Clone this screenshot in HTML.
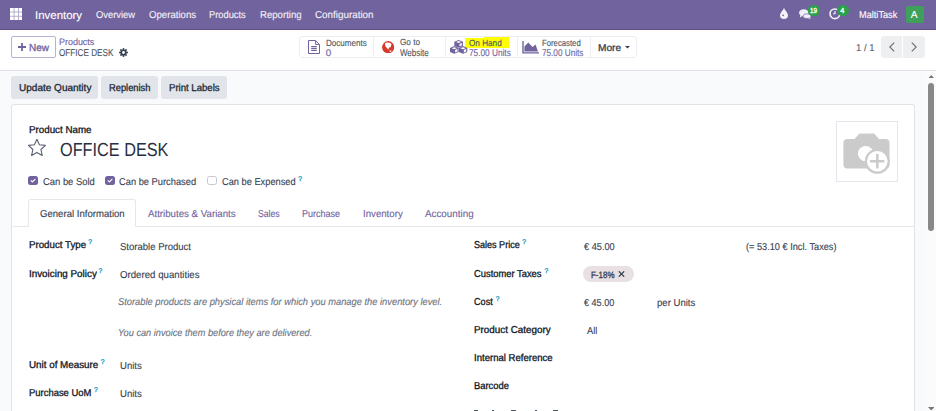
<!DOCTYPE html>
<html><head><meta charset="utf-8">
<style>
*{box-sizing:border-box;margin:0;padding:0}
html,body{width:936px;height:411px;overflow:hidden;background:#f9fafb;font-family:"Liberation Sans",sans-serif;text-rendering:geometricPrecision}
.t{position:absolute;white-space:nowrap;line-height:1;transform-origin:0 0}
.a{position:absolute}
</style></head><body>
<!-- navbar -->
<div class="a" style="left:0;top:0;width:936px;height:30px;background:#71639e;border-bottom:1px solid #5f5089"></div>
<svg class="a" style="left:9.7px;top:7.9px" width="12.4" height="12.2" viewBox="0 0 12.4 12.2"><rect width="12.4" height="12.2" fill="#fff"/><path d="M4.1 0V12.2M8.5 0V12.2M0 4H12.4M0 8.3H12.4" stroke="#71639e" stroke-width="0.9" opacity="0.55"/></svg>
<!-- droplet -->
<svg class="a" style="left:780px;top:8px" width="8" height="11" viewBox="0 0 8 11"><path d="M4 0 C4.8 2.4 8 4.8 8 7.2 A4 3.8 0 0 1 0 7.2 C0 4.8 3.2 2.4 4 0Z" fill="#f4f2fa"/><circle cx="3.1" cy="7.3" r="0.9" fill="#71639e"/></svg>
<!-- chat -->
<svg class="a" style="left:798.8px;top:9px" width="13" height="10" viewBox="0 0 13 10"><ellipse cx="4.8" cy="3.7" rx="4.8" ry="3.5" fill="#f0eef6"/><path d="M1.2 6 L1 8.4 L3.8 6.8Z" fill="#f0eef6"/><ellipse cx="8" cy="7.2" rx="4" ry="2.4" fill="#f0eef6" stroke="#71639e" stroke-width="0.7"/><path d="M10.5 8.6 L12.2 9.8 L9 9.2Z" fill="#f0eef6"/></svg>
<div class="a" style="left:807.9px;top:4.7px;width:11.8px;height:11.8px;border-radius:6px;background:#2aa148"></div>
<!-- clock -->
<svg class="a" style="left:829.2px;top:7.6px" width="12" height="12" viewBox="0 0 12 12"><circle cx="5.9" cy="5.8" r="4.85" fill="none" stroke="#f4f2fa" stroke-width="1.6"/><path d="M6 3 V5.7 H4" stroke="#f4f2fa" stroke-width="1.15" fill="none"/></svg>
<div class="a" style="left:836.8px;top:4.7px;width:11.8px;height:11.8px;border-radius:6px;background:#2aa148"></div>
<div class="a" style="left:906px;top:5.7px;width:17.5px;height:17.3px;border-radius:2px;background:#3ea05a"></div>
<!-- control panel -->
<div class="a" style="left:0;top:30px;width:936px;height:41px;background:#fff;border-bottom:1px solid #dee2e6"></div>
<div class="a" style="left:11.2px;top:35.5px;width:44.6px;height:22.4px;border:1px solid #b9b0d3;border-radius:2px"></div>
<svg class="a" style="left:18px;top:43px" width="8" height="8" viewBox="0 0 8 8"><path d="M4 0V8M0 4H8" stroke="#71639e" stroke-width="1.8"/></svg>
<!-- gear -->
<svg class="a" style="left:118.7px;top:48.3px" width="9" height="9" viewBox="-4.5 -4.5 9 9"><g fill="#374151"><circle r="3.1"/><rect x="-0.8" y="-4.4" width="1.6" height="2.2" transform="rotate(0)"/><rect x="-0.8" y="-4.4" width="1.6" height="2.2" transform="rotate(45)"/><rect x="-0.8" y="-4.4" width="1.6" height="2.2" transform="rotate(90)"/><rect x="-0.8" y="-4.4" width="1.6" height="2.2" transform="rotate(135)"/><rect x="-0.8" y="-4.4" width="1.6" height="2.2" transform="rotate(180)"/><rect x="-0.8" y="-4.4" width="1.6" height="2.2" transform="rotate(225)"/><rect x="-0.8" y="-4.4" width="1.6" height="2.2" transform="rotate(270)"/><rect x="-0.8" y="-4.4" width="1.6" height="2.2" transform="rotate(315)"/></g><circle r="1.4" fill="#fff"/></svg>
<!-- smart buttons -->
<div class="a" style="left:299px;top:36px;width:337.5px;height:22px;border:1px solid #eceef1;border-radius:3px;background:#fff"></div>
<div class="a" style="left:373.4px;top:36px;width:1px;height:22px;background:#eceef1"></div>
<div class="a" style="left:445.3px;top:36px;width:1px;height:22px;background:#eceef1"></div>
<div class="a" style="left:517.2px;top:36px;width:1px;height:22px;background:#eceef1"></div>
<div class="a" style="left:590.4px;top:36px;width:1px;height:22px;background:#eceef1"></div>
<!-- doc icon -->
<svg class="a" style="left:308px;top:40px" width="13" height="14" viewBox="0 0 13 14"><path d="M0.5 0.5 H7.5 L11.5 4.5 V13.5 H0.5Z" fill="none" stroke="#71639e" stroke-width="1"/><path d="M7.6 0.6 V4.4 H11.4" fill="none" stroke="#71639e" stroke-width="1"/><path d="M3.2 6.6H8.8M3.2 8.5H8.8M3.2 10.4H8.8" stroke="#71639e" stroke-width="1.1"/></svg>
<!-- globe -->
<svg class="a" style="left:381.8px;top:40.6px" width="12.4" height="12.4" viewBox="0 0 12.4 12.4"><circle cx="6.2" cy="6.2" r="6.1" fill="#d8392f"/><path d="M3.2 2 Q4.5 1.2 6 1.6 Q7.2 2.2 7.6 1.6 Q9 2.4 9.6 3.6 Q8.6 4.4 9 5.6 Q8 6.8 7 6.4 Q6.4 7.2 6.8 8.6 Q5.6 8.4 4.8 6.8 Q3.6 6.2 3.4 4.8 Q2.6 3.6 3.2 2Z" fill="#fff"/><path d="M7.4 9.6 Q8.6 9.2 9.8 9.8 Q9.4 10.8 8.2 11 Q7.4 10.6 7.4 9.6Z" fill="#fff"/></svg>
<!-- yellow highlight -->
<svg class="a" style="left:465px;top:36.9px" width="44" height="11.5" viewBox="0 0 44 11.5"><path d="M0 1.1 H19 V0 H44 V11.4 H0Z" fill="#ffff00"/></svg>
<!-- cubes -->
<svg class="a" style="left:449.6px;top:40px" width="18" height="14" viewBox="0 0 18 14"><polygon points="8.65,0.00 12.95,1.80 12.95,5.90 8.65,7.70 4.35,5.90 4.35,1.80" fill="#71639e"/><polygon points="8.65,1.10 11.25,2.10 8.65,3.10 6.05,2.10" fill="#fff"/><polygon points="9.45,3.90 11.85,2.95 11.85,5.35 9.45,6.35" fill="#fff"/><polygon points="4.30,6.10 8.60,7.90 8.60,12.00 4.30,13.80 0.00,12.00 0.00,7.90" fill="#71639e"/><polygon points="4.30,7.20 6.90,8.20 4.30,9.20 1.70,8.20" fill="#fff"/><polygon points="5.10,10.00 7.50,9.05 7.50,11.45 5.10,12.45" fill="#fff"/><polygon points="13.00,6.10 17.30,7.90 17.30,12.00 13.00,13.80 8.70,12.00 8.70,7.90" fill="#71639e"/><polygon points="13.00,7.20 15.60,8.20 13.00,9.20 10.40,8.20" fill="#fff"/><polygon points="13.80,10.00 16.20,9.05 16.20,11.45 13.80,12.45" fill="#fff"/></svg>
<!-- area chart -->
<svg class="a" style="left:522px;top:40.5px" width="17" height="13" viewBox="0 0 17 13"><path d="M1 0 V11.9 H17" stroke="#71639e" stroke-width="1.4" fill="none"/><path d="M2.4 10.4 V5.5 L6.3 1.5 L10.6 5.9 L13.5 3.4 L16 10.4Z" fill="#71639e"/></svg>
<!-- caret -->
<svg class="a" style="left:624.8px;top:46.3px" width="5" height="3" viewBox="0 0 5 3"><path d="M0 0H5L2.5 2.6Z" fill="#374151"/></svg>
<!-- pager -->
<div class="a" style="left:881px;top:36px;width:44px;height:22px;border-radius:3px;background:#edeff1"></div>
<div class="a" style="left:902px;top:36px;width:1px;height:22px;background:#fff"></div>
<svg class="a" style="left:889.1px;top:42.1px" width="6" height="10" viewBox="0 0 6 10"><path d="M5.2 0.6 L0.8 5 L5.2 9.4" stroke="#707070" stroke-width="1.2" fill="none"/></svg>
<svg class="a" style="left:911.1px;top:42.1px" width="6" height="10" viewBox="0 0 6 10"><path d="M0.8 0.6 L5.2 5 L0.8 9.4" stroke="#707070" stroke-width="1.2" fill="none"/></svg>
<!-- action buttons -->
<div class="a" style="left:11px;top:76.2px;width:86.7px;height:22.5px;border-radius:3px;background:#e1e4e8"></div>
<div class="a" style="left:101px;top:76.2px;width:56.7px;height:22.5px;border-radius:3px;background:#e1e4e8"></div>
<div class="a" style="left:161px;top:76.2px;width:65.7px;height:22.5px;border-radius:3px;background:#e1e4e8"></div>
<!-- sheet -->
<div class="a" style="left:11px;top:104px;width:904px;height:330px;background:#fff;border:1px solid #dfe2e6;border-radius:3px"></div>
<!-- star -->
<svg class="a" style="left:27.9px;top:139.2px" width="18" height="18" viewBox="0 0 18 18"><polygon points="8.90,0.20 11.39,5.78 17.46,6.42 12.92,10.51 14.19,16.48 8.90,13.43 3.61,16.48 4.88,10.51 0.34,6.42 6.41,5.78" fill="none" stroke="#586170" stroke-width="1.1" stroke-linejoin="round"/></svg>
<!-- checkboxes -->
<div class="a" style="left:28.0px;top:175.6px;width:9.8px;height:9.4px;border-radius:2.5px;background:#71639e"></div>
<svg class="a" style="left:28.0px;top:175.6px" width="9.8" height="9.4" viewBox="0 0 10 10"><path d="M3.1 5.1 L4.5 6.3 L7.2 3.5" stroke="#fff" stroke-width="1.25" fill="none" stroke-linecap="round" stroke-linejoin="round"/></svg>
<div class="a" style="left:104.89999999999999px;top:175.6px;width:9.8px;height:9.4px;border-radius:2.5px;background:#71639e"></div>
<svg class="a" style="left:104.89999999999999px;top:175.6px" width="9.8" height="9.4" viewBox="0 0 10 10"><path d="M3.1 5.1 L4.5 6.3 L7.2 3.5" stroke="#fff" stroke-width="1.25" fill="none" stroke-linecap="round" stroke-linejoin="round"/></svg>
<div class="a" style="left:207px;top:175.6px;width:9.8px;height:9.5px;border-radius:2.5px;border:1px solid #c4c8ce;background:#fff"></div>
<!-- image placeholder -->
<div class="a" style="left:836.4px;top:121px;width:61.2px;height:61.2px;border:1px solid #e3e6ea;background:#fff"></div>
<svg class="a" style="left:838px;top:125px" width="58" height="55" viewBox="0 0 58 55">
<rect x="5.4" y="14" width="46.1" height="29.5" rx="4" fill="#cbcbcb"/>
<path d="M16.6 15 L21.6 9.2 H35.9 L41 15Z" fill="#cbcbcb" stroke="#cbcbcb" stroke-width="1.2" stroke-linejoin="round"/>
<circle cx="27.6" cy="28.6" r="7.7" fill="#fff"/>
<circle cx="39.3" cy="36.3" r="12.5" fill="#cbcbcb"/><circle cx="39.3" cy="36.3" r="10.3" fill="#fff"/>
<path d="M31.9 36.3 H46.4 M39.3 29 V43.6" stroke="#cbcbcb" stroke-width="2.5"/>
</svg>
<!-- tabs -->
<div class="a" style="left:12.5px;top:226px;width:901px;height:1px;background:#e5e7eb"></div>
<div class="a" style="left:28px;top:199.4px;width:108px;height:27.6px;border:1px solid #e5e7eb;border-bottom:none;border-radius:3px 3px 0 0;background:#fff"></div>
<!-- tag -->
<div class="a" style="left:583px;top:265.9px;width:50.8px;height:16px;border-radius:8px;background:#e8e0e2"></div>
<svg class="a" style="left:618.4px;top:271.1px" width="7" height="6" viewBox="0 0 7 6"><path d="M0.8 0.3 L6.2 5.7 M6.2 0.3 L0.8 5.7" stroke="#374151" stroke-width="1.2"/></svg>
<!-- bottom cut label -->
<div class="a" style="left:474.4px;top:410px;width:3.8px;height:1px;background:#4b5563"></div><div class="a" style="left:492.2px;top:410px;width:1.8px;height:1px;background:#4b5563"></div><div class="a" style="left:510.5px;top:410px;width:5.7px;height:1px;background:#4b5563"></div><div class="a" style="left:534.7px;top:410px;width:2.1px;height:1px;background:#4b5563"></div><div class="a" style="left:553px;top:410px;width:5.3px;height:1px;background:#4b5563"></div>
<!-- scrollbar -->
<div class="a" style="left:925px;top:71px;width:11px;height:340px;background:#fbfbfc"></div>
<svg class="a" style="left:927.8px;top:74.6px" width="6.5" height="3.6" viewBox="0 0 6.5 3.6"><path d="M0 3.6 H6.5 L3.25 0Z" fill="#777"/></svg>
<div class="a" style="left:927.9px;top:83px;width:6.3px;height:148px;border-radius:3.2px;background:#888"></div>
<svg class="a" style="left:927.8px;top:406.8px" width="6.5" height="3.6" viewBox="0 0 6.5 3.6"><path d="M0 0 H6.5 L3.25 3.6Z" fill="#777"/></svg>
<span class="t" style="left:34.90px;top:11.00px;font-size:11.3px;letter-spacing:0.000px;font-weight:normal;font-style:normal;color:#ffffff;-webkit-text-stroke:0.12px #ffffff;transform:scaleX(1.0134);">Inventory</span>
<span class="t" style="left:96.30px;top:11.00px;font-size:10.0px;letter-spacing:0.000px;font-weight:normal;font-style:normal;color:#f3f1f8;-webkit-text-stroke:0.12px #f3f1f8;transform:scaleX(0.9353);">Overview</span>
<span class="t" style="left:148.50px;top:11.00px;font-size:10.0px;letter-spacing:0.000px;font-weight:normal;font-style:normal;color:#f3f1f8;-webkit-text-stroke:0.12px #f3f1f8;transform:scaleX(0.9627);">Operations</span>
<span class="t" style="left:209.30px;top:11.00px;font-size:10.0px;letter-spacing:0.000px;font-weight:normal;font-style:normal;color:#f3f1f8;-webkit-text-stroke:0.12px #f3f1f8;transform:scaleX(0.9297);">Products</span>
<span class="t" style="left:259.70px;top:11.00px;font-size:10.0px;letter-spacing:0.000px;font-weight:normal;font-style:normal;color:#f3f1f8;-webkit-text-stroke:0.12px #f3f1f8;transform:scaleX(0.9596);">Reporting</span>
<span class="t" style="left:314.80px;top:11.00px;font-size:10.0px;letter-spacing:0.000px;font-weight:normal;font-style:normal;color:#f3f1f8;-webkit-text-stroke:0.12px #f3f1f8;transform:scaleX(0.9836);">Configuration</span>
<span class="t" style="left:859.00px;top:11.00px;font-size:10.0px;letter-spacing:0.000px;font-weight:normal;font-style:normal;color:#ffffff;-webkit-text-stroke:0.12px #ffffff;transform:scaleX(0.9185);">MaltiTask</span>
<span class="t" style="left:810.40px;top:7.00px;font-size:7.4px;letter-spacing:0.000px;font-weight:normal;font-style:normal;color:#ffffff;-webkit-text-stroke:0.32px #ffffff;transform:scaleX(0.8511);">19</span>
<span class="t" style="left:840.20px;top:7.00px;font-size:7.4px;letter-spacing:0.000px;font-weight:normal;font-style:normal;color:#ffffff;-webkit-text-stroke:0.32px #ffffff;">4</span>
<span class="t" style="left:910.80px;top:11.00px;font-size:10.2px;letter-spacing:0.000px;font-weight:normal;font-style:normal;color:#ffffff;-webkit-text-stroke:0.12px #ffffff;">A</span>
<span class="t" style="left:29.20px;top:44.00px;font-size:10.2px;letter-spacing:0.000px;font-weight:normal;font-style:normal;color:#71639e;-webkit-text-stroke:0.32px #71639e;transform:scaleX(0.9780);">New</span>
<span class="t" style="left:59.20px;top:37.00px;font-size:9.4px;letter-spacing:0.000px;font-weight:normal;font-style:normal;color:#71639e;-webkit-text-stroke:0.12px #71639e;transform:scaleX(0.9542);">Products</span>
<span class="t" style="left:59.20px;top:49.00px;font-size:10.0px;letter-spacing:0.000px;font-weight:normal;font-style:normal;color:#4b5563;-webkit-text-stroke:0.12px #4b5563;transform:scaleX(0.8159);">OFFICE DESK</span>
<span class="t" style="left:325.60px;top:39.00px;font-size:9.0px;letter-spacing:0.000px;font-weight:normal;font-style:normal;color:#4b5563;-webkit-text-stroke:0.12px #4b5563;transform:scaleX(0.8962);">Documents</span>
<span class="t" style="left:325.80px;top:49.00px;font-size:9.8px;letter-spacing:0.000px;font-weight:normal;font-style:normal;color:#71639e;-webkit-text-stroke:0.12px #71639e;">0</span>
<span class="t" style="left:399.80px;top:38.00px;font-size:9.0px;letter-spacing:0.000px;font-weight:normal;font-style:normal;color:#4b5563;-webkit-text-stroke:0.12px #4b5563;transform:scaleX(0.9091);">Go to</span>
<span class="t" style="left:399.80px;top:49.00px;font-size:9.8px;letter-spacing:0.000px;font-weight:normal;font-style:normal;color:#4b5563;-webkit-text-stroke:0.12px #4b5563;transform:scaleX(0.8119);">Website</span>
<span class="t" style="left:468.60px;top:39.00px;font-size:9.0px;letter-spacing:0.000px;font-weight:normal;font-style:normal;color:#4b5563;-webkit-text-stroke:0.12px #4b5563;transform:scaleX(0.9077);">On Hand</span>
<span class="t" style="left:468.60px;top:49.00px;font-size:9.8px;letter-spacing:0.000px;font-weight:normal;font-style:normal;color:#71639e;-webkit-text-stroke:0.12px #71639e;transform:scaleX(0.8432);">75.00 Units</span>
<span class="t" style="left:541.70px;top:39.00px;font-size:9.0px;letter-spacing:0.000px;font-weight:normal;font-style:normal;color:#4b5563;-webkit-text-stroke:0.12px #4b5563;transform:scaleX(0.8595);">Forecasted</span>
<span class="t" style="left:541.70px;top:49.00px;font-size:9.8px;letter-spacing:0.000px;font-weight:normal;font-style:normal;color:#71639e;-webkit-text-stroke:0.12px #71639e;transform:scaleX(0.8351);">75.00 Units</span>
<span class="t" style="left:597.90px;top:44.00px;font-size:10.0px;letter-spacing:0.000px;font-weight:normal;font-style:normal;color:#374151;-webkit-text-stroke:0.32px #374151;transform:scaleX(1.0143);">More</span>
<span class="t" style="left:856.40px;top:44.00px;font-size:10.0px;letter-spacing:0.000px;font-weight:normal;font-style:normal;color:#5b6370;-webkit-text-stroke:0.12px #5b6370;transform:scaleX(0.9460);">1 / 1</span>
<span class="t" style="left:18.50px;top:84.00px;font-size:10.0px;letter-spacing:0.000px;font-weight:normal;font-style:normal;color:#1f2937;-webkit-text-stroke:0.32px #1f2937;transform:scaleX(1.0017);">Update Quantity</span>
<span class="t" style="left:109.00px;top:84.00px;font-size:10.0px;letter-spacing:0.000px;font-weight:normal;font-style:normal;color:#1f2937;-webkit-text-stroke:0.32px #1f2937;transform:scaleX(0.9309);">Replenish</span>
<span class="t" style="left:168.50px;top:84.00px;font-size:10.0px;letter-spacing:0.000px;font-weight:normal;font-style:normal;color:#1f2937;-webkit-text-stroke:0.32px #1f2937;transform:scaleX(0.9583);">Print Labels</span>
<span class="t" style="left:28.70px;top:126.00px;font-size:10.0px;letter-spacing:0.000px;font-weight:normal;font-style:normal;color:#111827;-webkit-text-stroke:0.32px #111827;transform:scaleX(0.9777);">Product Name</span>
<span class="t" style="left:60.30px;top:142.00px;font-size:18.9px;letter-spacing:0.000px;font-weight:normal;font-style:normal;color:#283040;transform:scaleX(0.8609);">OFFICE DESK</span>
<span class="t" style="left:42.80px;top:178.00px;font-size:10.0px;letter-spacing:0.000px;font-weight:normal;font-style:normal;color:#374151;-webkit-text-stroke:0.12px #374151;transform:scaleX(0.9410);">Can be Sold</span>
<span class="t" style="left:119.20px;top:178.00px;font-size:10.0px;letter-spacing:0.000px;font-weight:normal;font-style:normal;color:#374151;-webkit-text-stroke:0.12px #374151;transform:scaleX(0.9309);">Can be Purchased</span>
<span class="t" style="left:221.70px;top:178.00px;font-size:10.0px;letter-spacing:0.000px;font-weight:normal;font-style:normal;color:#374151;-webkit-text-stroke:0.12px #374151;transform:scaleX(0.9258);">Can be Expensed</span>
<span class="t" style="left:298.30px;top:177.00px;font-size:6.8px;letter-spacing:0.000px;font-weight:normal;font-style:normal;color:#2ba0cc;-webkit-text-stroke:0.32px #2ba0cc;">?</span>
<span class="t" style="left:39.80px;top:210.00px;font-size:10.0px;letter-spacing:0.000px;font-weight:normal;font-style:normal;color:#374151;-webkit-text-stroke:0.12px #374151;transform:scaleX(0.9584);">General Information</span>
<span class="t" style="left:147.70px;top:210.00px;font-size:10.0px;letter-spacing:0.000px;font-weight:normal;font-style:normal;color:#71639e;-webkit-text-stroke:0.12px #71639e;transform:scaleX(0.9688);">Attributes &amp; Variants</span>
<span class="t" style="left:258.00px;top:210.00px;font-size:10.0px;letter-spacing:0.000px;font-weight:normal;font-style:normal;color:#71639e;-webkit-text-stroke:0.12px #71639e;transform:scaleX(0.8631);">Sales</span>
<span class="t" style="left:302.30px;top:210.00px;font-size:10.0px;letter-spacing:0.000px;font-weight:normal;font-style:normal;color:#71639e;-webkit-text-stroke:0.12px #71639e;transform:scaleX(0.9018);">Purchase</span>
<span class="t" style="left:363.00px;top:210.00px;font-size:10.0px;letter-spacing:0.000px;font-weight:normal;font-style:normal;color:#71639e;-webkit-text-stroke:0.12px #71639e;transform:scaleX(0.9653);">Inventory</span>
<span class="t" style="left:425.10px;top:210.00px;font-size:10.0px;letter-spacing:0.000px;font-weight:normal;font-style:normal;color:#71639e;-webkit-text-stroke:0.12px #71639e;transform:scaleX(0.9823);">Accounting</span>
<span class="t" style="left:28.50px;top:241.00px;font-size:10.0px;letter-spacing:0.000px;font-weight:normal;font-style:normal;color:#111827;-webkit-text-stroke:0.32px #111827;transform:scaleX(0.9719);">Product Type</span>
<span class="t" style="left:88.20px;top:240.00px;font-size:6.8px;letter-spacing:0.000px;font-weight:normal;font-style:normal;color:#2ba0cc;-webkit-text-stroke:0.32px #2ba0cc;">?</span>
<span class="t" style="left:28.50px;top:270.00px;font-size:10.0px;letter-spacing:0.000px;font-weight:normal;font-style:normal;color:#111827;-webkit-text-stroke:0.32px #111827;transform:scaleX(0.9837);">Invoicing Policy</span>
<span class="t" style="left:98.60px;top:269.00px;font-size:6.8px;letter-spacing:0.000px;font-weight:normal;font-style:normal;color:#2ba0cc;-webkit-text-stroke:0.32px #2ba0cc;">?</span>
<span class="t" style="left:28.50px;top:361.00px;font-size:10.0px;letter-spacing:0.000px;font-weight:normal;font-style:normal;color:#111827;-webkit-text-stroke:0.32px #111827;transform:scaleX(0.9816);">Unit of Measure</span>
<span class="t" style="left:100.80px;top:360.00px;font-size:6.8px;letter-spacing:0.000px;font-weight:normal;font-style:normal;color:#2ba0cc;-webkit-text-stroke:0.32px #2ba0cc;">?</span>
<span class="t" style="left:28.50px;top:389.00px;font-size:10.0px;letter-spacing:0.000px;font-weight:normal;font-style:normal;color:#111827;-webkit-text-stroke:0.32px #111827;transform:scaleX(0.9433);">Purchase UoM</span>
<span class="t" style="left:94.00px;top:388.00px;font-size:6.8px;letter-spacing:0.000px;font-weight:normal;font-style:normal;color:#2ba0cc;-webkit-text-stroke:0.32px #2ba0cc;">?</span>
<span class="t" style="left:120.40px;top:243.00px;font-size:10.0px;letter-spacing:0.000px;font-weight:normal;font-style:normal;color:#374151;-webkit-text-stroke:0.12px #374151;transform:scaleX(0.9530);">Storable Product</span>
<span class="t" style="left:120.40px;top:271.00px;font-size:10.0px;letter-spacing:0.000px;font-weight:normal;font-style:normal;color:#374151;-webkit-text-stroke:0.12px #374151;transform:scaleX(0.9663);">Ordered quantities</span>
<span class="t" style="left:117.70px;top:298.00px;font-size:10.0px;letter-spacing:0.000px;font-weight:normal;font-style:italic;color:#6b7280;-webkit-text-stroke:0.12px #6b7280;transform:scaleX(0.9317);">Storable products are physical items for which you manage the inventory level.</span>
<span class="t" style="left:117.70px;top:329.00px;font-size:10.0px;letter-spacing:0.000px;font-weight:normal;font-style:italic;color:#6b7280;-webkit-text-stroke:0.12px #6b7280;transform:scaleX(0.9193);">You can invoice them before they are delivered.</span>
<span class="t" style="left:120.40px;top:362.00px;font-size:10.0px;letter-spacing:0.000px;font-weight:normal;font-style:normal;color:#374151;-webkit-text-stroke:0.12px #374151;transform:scaleX(0.9572);">Units</span>
<span class="t" style="left:120.40px;top:390.00px;font-size:10.0px;letter-spacing:0.000px;font-weight:normal;font-style:normal;color:#374151;-webkit-text-stroke:0.12px #374151;transform:scaleX(0.9572);">Units</span>
<span class="t" style="left:474.20px;top:241.00px;font-size:10.0px;letter-spacing:0.000px;font-weight:normal;font-style:normal;color:#111827;-webkit-text-stroke:0.32px #111827;transform:scaleX(0.9036);">Sales Price</span>
<span class="t" style="left:522.30px;top:240.00px;font-size:6.8px;letter-spacing:0.000px;font-weight:normal;font-style:normal;color:#2ba0cc;-webkit-text-stroke:0.32px #2ba0cc;">?</span>
<span class="t" style="left:474.20px;top:270.00px;font-size:10.0px;letter-spacing:0.000px;font-weight:normal;font-style:normal;color:#111827;-webkit-text-stroke:0.32px #111827;transform:scaleX(0.9365);">Customer Taxes</span>
<span class="t" style="left:544.60px;top:269.00px;font-size:6.8px;letter-spacing:0.000px;font-weight:normal;font-style:normal;color:#2ba0cc;-webkit-text-stroke:0.32px #2ba0cc;">?</span>
<span class="t" style="left:474.20px;top:298.00px;font-size:10.0px;letter-spacing:0.000px;font-weight:normal;font-style:normal;color:#111827;-webkit-text-stroke:0.32px #111827;transform:scaleX(0.9100);">Cost</span>
<span class="t" style="left:495.80px;top:297.00px;font-size:6.8px;letter-spacing:0.000px;font-weight:normal;font-style:normal;color:#2ba0cc;-webkit-text-stroke:0.32px #2ba0cc;">?</span>
<span class="t" style="left:474.20px;top:326.00px;font-size:10.0px;letter-spacing:0.000px;font-weight:normal;font-style:normal;color:#111827;-webkit-text-stroke:0.32px #111827;transform:scaleX(0.9855);">Product Category</span>
<span class="t" style="left:474.20px;top:354.00px;font-size:10.0px;letter-spacing:0.000px;font-weight:normal;font-style:normal;color:#111827;-webkit-text-stroke:0.32px #111827;transform:scaleX(0.9565);">Internal Reference</span>
<span class="t" style="left:474.20px;top:382.00px;font-size:10.0px;letter-spacing:0.000px;font-weight:normal;font-style:normal;color:#111827;-webkit-text-stroke:0.32px #111827;transform:scaleX(0.9396);">Barcode</span>
<span class="t" style="left:583.60px;top:243.00px;font-size:10.0px;letter-spacing:0.000px;font-weight:normal;font-style:normal;color:#374151;-webkit-text-stroke:0.12px #374151;transform:scaleX(0.9199);">€ 45.00</span>
<span class="t" style="left:745.50px;top:243.00px;font-size:10.0px;letter-spacing:0.000px;font-weight:normal;font-style:normal;color:#374151;-webkit-text-stroke:0.12px #374151;transform:scaleX(0.9190);">(= 53.10 € Incl. Taxes)</span>
<span class="t" style="left:591.00px;top:271.00px;font-size:9.2px;letter-spacing:0.000px;font-weight:normal;font-style:normal;color:#374151;-webkit-text-stroke:0.32px #374151;transform:scaleX(0.8672);">F-18%</span>
<span class="t" style="left:583.90px;top:299.00px;font-size:10.0px;letter-spacing:0.000px;font-weight:normal;font-style:normal;color:#374151;-webkit-text-stroke:0.12px #374151;transform:scaleX(0.9079);">€ 45.00</span>
<span class="t" style="left:657.30px;top:299.00px;font-size:10.0px;letter-spacing:0.000px;font-weight:normal;font-style:normal;color:#374151;-webkit-text-stroke:0.12px #374151;transform:scaleX(0.9569);">per Units</span>
<span class="t" style="left:586.50px;top:327.00px;font-size:10.0px;letter-spacing:0.000px;font-weight:normal;font-style:normal;color:#374151;-webkit-text-stroke:0.12px #374151;transform:scaleX(0.9258);">All</span>
</body></html>
